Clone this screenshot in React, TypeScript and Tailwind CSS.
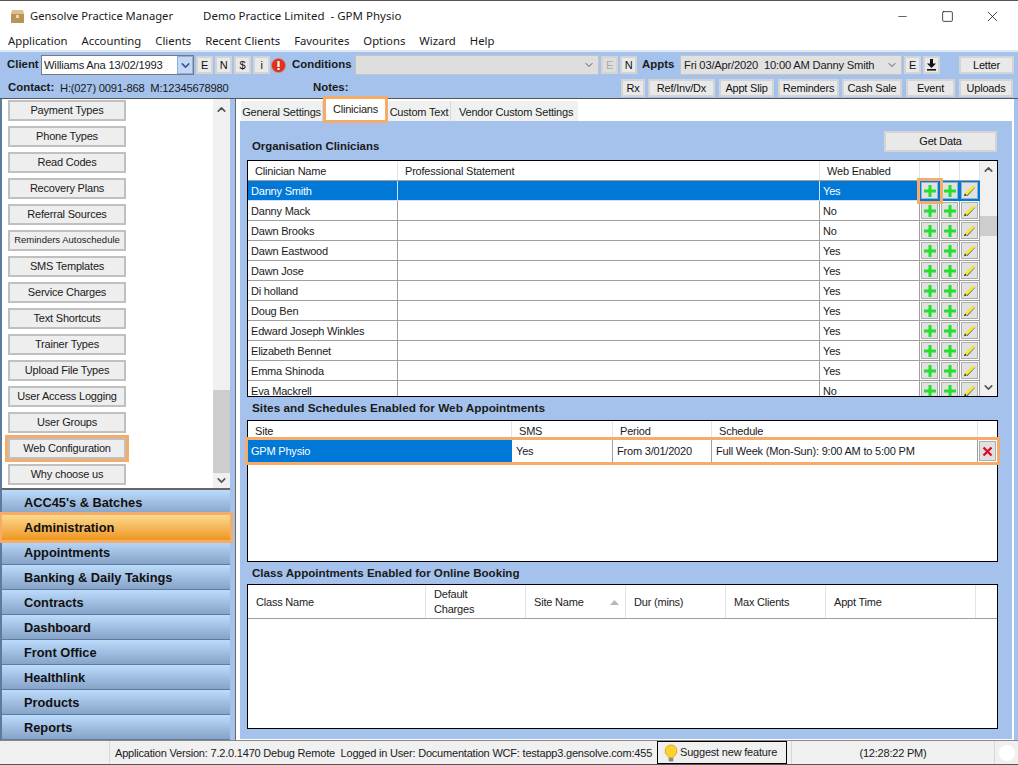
import React from "react";
import { ChevronUp, ChevronDown, Minus, Square, X } from "lucide-react";

const SF = "[font-family:'Liberation_Sans',Arial,sans-serif]";

function Btn({ w, h = "h-[18px]", label, cls = "" }: { w: string; h?: string; label: React.ReactNode; cls?: string }) {
  return (
    <div className={`${w} ${h} ${cls} shrink-0 flex items-center justify-center bg-[#e9e9e9] border-2 border-[#d4d4d4] text-[11px] tracking-[-0.2px] text-[#111] whitespace-nowrap`}>
      {label}
    </div>
  );
}

function Plus() {
  return (
    <svg width="12" height="12" viewBox="0 0 12 12">
      <path d="M4.5 0h3v4.5H12v3H7.5V12h-3V7.5H0v-3h4.5z" fill="#22e02c" />
    </svg>
  );
}

function Pencil() {
  return (
    <svg width="13" height="13" viewBox="0 0 13 13">
      <path d="M1 12 L2 9 L10 1.5 L12 3 L4 11 Z" fill="#f5e92a" />
      <path d="M1 12.3 L2 9.5 L3.8 11.2 Z M3.8 11.6 L11.5 3.8 L12.4 3.2 L4.2 12 Z" fill="#222" />
    </svg>
  );
}

function IconCell({ children, sel }: { children: React.ReactNode; sel?: boolean }) {
  return (
    <div className={`w-[20px] h-full shrink-0 flex items-center justify-center p-[1px] border-r border-b ${sel ? "border-[#0078d7] bg-[#0078d7]" : "border-[#a0a0a0] bg-white"}`}>
      <div className={`w-full h-full flex items-center justify-center bg-[#e1e1e1] border ${sel ? "border-[#8fb3d3]" : "border-[#adadad]"}`}>{children}</div>
    </div>
  );
}

const sideButtons = [
  "Payment Types", "Phone Types", "Read Codes", "Recovery Plans", "Referral Sources", "Reminders Autoschedule",
  "SMS Templates", "Service Charges", "Text Shortcuts", "Trainer Types", "Upload File Types", "User Access Logging",
  "User Groups", "Web Configuration", "Why choose us",
];

const navItems = ["ACC45's & Batches", "Administration", "Appointments", "Banking & Daily Takings", "Contracts", "Dashboard", "Front Office", "Healthlink", "Products", "Reports"];

const clinicians: [string, string][] = [
  ["Danny Smith", "Yes"], ["Danny Mack", "No"], ["Dawn Brooks", "No"], ["Dawn Eastwood", "Yes"], ["Dawn Jose", "Yes"],
  ["Di holland", "Yes"], ["Doug Ben", "Yes"], ["Edward Joseph Winkles", "Yes"], ["Elizabeth Bennet", "Yes"],
  ["Emma Shinoda", "Yes"], ["Eva Mackrell", "No"],
];

function Hd({ w, children, cls = "" }: { w: string; children?: React.ReactNode; cls?: string }) {
  return <div className={`${w} ${cls} shrink-0 h-full flex items-center border-r border-[#e4e4e4] px-[7px] pt-[1px] leading-[15px]`}>{children}</div>;
}

export default function App() {
  return (
    <div className={`w-[1018px] h-[765px] overflow-hidden flex flex-col bg-white text-[11px] tracking-[-0.2px] text-[#1a1a1a] ${SF}`}>
      {/* Title bar */}
      <div className="h-[30px] shrink-0 flex items-center border-t border-[#555] bg-white pl-[10px] pr-[3px] pt-[1px] text-[11.5px] tracking-normal [font-family:'Noto_Sans',sans-serif]">
        <svg width="15" height="15" viewBox="0 0 15 15" className="mr-[5px]">
          <rect x="1" y="5" width="13" height="9" fill="#b8935a" />
          <path d="M2 1h11l1 4H1z" fill="#dcc08c" />
          <rect x="6" y="6" width="3" height="3" fill="#ecd8a8" />
        </svg>
        <span className="w-[173px] text-[11.2px]">Gensolve Practice Manager</span>
        <span className="whitespace-pre">Demo Practice Limited  - GPM Physio</span>
        <div className="flex-1" />
        <div className="w-[45px] flex justify-center"><Minus size={13} strokeWidth={1.2} color="#111" /></div>
        <div className="w-[45px] flex justify-center"><Square size={13} strokeWidth={1.4} color="#111" /></div>
        <div className="w-[45px] flex justify-center"><X size={17} strokeWidth={1.1} color="#111" /></div>
      </div>
      {/* Menu */}
      <div className="h-[20px] shrink-0 flex items-center gap-[14px] pl-[8px] pt-[3px] bg-white text-[11.3px] tracking-normal [font-family:'Noto_Sans',sans-serif]">
        {["Application", "Accounting", "Clients", "Recent Clients", "Favourites", "Options", "Wizard", "Help"].map((m) => (
          <span key={m}>{m}</span>
        ))}
      </div>
      {/* Toolbar */}
      <div className="h-[49px] shrink-0 bg-[#a4c2eb] border-t-2 border-[#dce8f6] border-b border-b-[#555] flex flex-col">
        <div className="h-[26px] shrink-0 flex items-center pl-[7px]">
          <span className="font-bold w-[34px] text-[11.4px] tracking-normal">Client</span>
          <div className="w-[153px] h-[20px] bg-white border border-[#7a7a7a] flex items-center justify-between pl-[2px]">
            <span className="text-[11.2px]">Williams Ana 13/02/1993</span>
            <div className="w-[16px] h-full bg-[#c5d8f3] border border-[#8fb0dc] flex items-center justify-center"><ChevronDown size={13} strokeWidth={3} color="#3a5a90" /></div>
          </div>
          <Btn w="w-[17px]" cls="ml-[2px]" label="E" />
          <Btn w="w-[17px]" cls="ml-[2px]" label="N" />
          <Btn w="w-[17px]" cls="ml-[2px]" label="$" />
          <Btn w="w-[17px]" cls="ml-[2px]" label="i" />
          <svg width="15" height="15" viewBox="0 0 15 15" className="ml-[1px]">
            <circle cx="7.5" cy="7.5" r="7" fill="#e0301e" stroke="#c89070" strokeWidth="0.7" />
            <rect x="6.4" y="3" width="2.2" height="6" fill="#fff" />
            <rect x="6.4" y="10" width="2.2" height="2" fill="#fff" />
          </svg>
          <span className="font-bold ml-[6px] w-[63px] text-[11.4px] tracking-normal">Conditions</span>
          <div className="w-[244px] h-[20px] bg-[#dedede] border border-[#c4c4c4] flex items-center justify-end pr-[3px]"><ChevronDown size={12} color="#555" /></div>
          <Btn w="w-[17px]" cls="ml-[2px] text-[#aaa]! bg-[#dedede]!" label="E" />
          <Btn w="w-[17px]" cls="ml-[2px]" label="N" />
          <span className="font-bold ml-[5px] w-[38px] text-[11.4px] tracking-normal">Appts</span>
          <div className="w-[222px] h-[20px] bg-[#e1e1e1] border border-[#c4c4c4] flex items-center justify-between pl-[3px] pr-[3px]">
            <span className="whitespace-pre text-[11.2px]">Fri 03/Apr/2020  10:00 AM Danny Smith</span>
            <ChevronDown size={12} color="#555" />
          </div>
          <Btn w="w-[17px]" cls="ml-[2px]" label="E" />
          <Btn
            w="w-[17px]"
            cls="ml-[2px]"
            label={
              <svg width="11" height="12" viewBox="0 0 11 12">
                <path d="M4 0h3v4.5h3L5.5 9 1 4.5h3z" fill="#111" />
                <rect x="1" y="10" width="9" height="1.6" fill="#111" />
              </svg>
            }
          />
          <Btn w="w-[55px]" cls="ml-[19px]" label="Letter" />
        </div>
        <div className="h-[20px] shrink-0 flex items-center pl-[8px]">
          <span className="font-bold w-[52px] text-[11.4px] tracking-normal">Contact:</span>
          <span className="w-[253px] whitespace-pre text-[11.2px]">H:(027) 0091-868  M:12345678980</span>
          <span className="font-bold w-[308px] text-[11.4px] tracking-normal">Notes:</span>
          <Btn w="w-[24px]" label="Rx" />
          <Btn w="w-[67px]" cls="ml-[3px]" label="Ref/Inv/Dx" />
          <Btn w="w-[55px]" cls="ml-[4px]" label="Appt Slip" />
          <Btn w="w-[61px]" cls="ml-[4px]" label="Reminders" />
          <Btn w="w-[60px]" cls="ml-[3px]" label="Cash Sale" />
          <Btn w="w-[49px]" cls="ml-[4px]" label="Event" />
          <Btn w="w-[54px]" cls="ml-[4px]" label="Uploads" />
        </div>
      </div>
      {/* Main */}
      <div className="h-[641px] shrink-0 flex bg-[#a4c2eb]">
        {/* Left */}
        <div className="w-[230px] shrink-0 flex flex-col pl-[2px] bg-[#5d7c9c]">
          <div className="h-[391px] shrink-0 flex bg-white border-b-2 border-[#666]">
            <div className="w-[211px] flex flex-col gap-[5px] pl-[6px] mt-[1px]">
              {sideButtons.map((b) => {
                const sel = b === "Web Configuration";
                return (
                  <div
                    key={b}
                    className={`w-[118px] h-[21px] shrink-0 flex items-center justify-center bg-[#eeeeee] border-2 border-[#c0c0c0] whitespace-nowrap ${b === "Reminders Autoschedule" ? "text-[9.5px] tracking-normal" : "text-[11px]"} ${sel ? "outline-[3px] outline-[#f5ab6a]" : ""}`}
                  >
                    {b}
                  </div>
                );
              })}
            </div>
            <div className="w-[17px] shrink-0 bg-[#f0f0f0] flex flex-col">
              <div className="h-[20px] flex items-center justify-center"><ChevronUp size={13} strokeWidth={3} color="#555" /></div>
              <div className="h-[271px]" />
              <div className="h-[83px] bg-[#cdcdcd]" />
              <div className="flex-1 flex items-center justify-center"><ChevronDown size={13} strokeWidth={3} color="#555" /></div>
            </div>
          </div>
          <div className="flex-1 flex flex-col">
            {navItems.map((n) => {
              const sel = n === "Administration";
              return (
                <div
                  key={n}
                  className={`h-[25px] shrink-0 flex items-center pl-[22px] pt-[1px] font-bold text-[12.8px] tracking-normal text-[#111] border-b ${sel ? "relative z-10 bg-gradient-to-b from-[#fbd98a] to-[#ee991c] border-[#ee991c] outline-[3px] outline-[#f5ab6a]" : "bg-gradient-to-b from-[#bcdcfc] to-[#87a3c9] border-[#5d7c9c]"}`}
                >
                  {n}
                </div>
              );
            })}
          </div>
        </div>
        {/* Right */}
        <div className="w-[6px] shrink-0 bg-[#a4c2eb] border-r border-[#666]" />
        <div className="w-[778px] shrink-0 flex flex-col bg-white pl-[4px] pr-[2px] pb-[1px]">
          {/* Tabs */}
          <div className="h-[22px] shrink-0 flex items-end pl-[1px]">
            <div className="w-[82px] h-[20px] bg-[#f0f0f0] flex items-center justify-center border-r border-[#d9d9d9] whitespace-nowrap pt-[2px]">General Settings</div>
            <div className="w-[59px] h-[21px] ml-[3px] mb-[1px] bg-white flex items-center justify-center relative z-10 outline-[3px] outline-[#f5ab6a]">Clinicians</div>
            <div className="w-[63px] h-[20px] ml-[3px] bg-[#f0f0f0] flex items-center justify-center border-r border-[#d9d9d9] whitespace-nowrap pt-[2px]">Custom Text</div>
            <div className="w-[127px] h-[20px] bg-[#f0f0f0] flex items-center pl-[8px] whitespace-nowrap pt-[2px]">Vendor Custom Settings</div>
          </div>
          <div className="flex-1 flex flex-col bg-[#a4c2eb] pl-[7px] pr-[14px]">
            <div className="h-[39px] shrink-0 flex items-end justify-between pb-[8px]">
              <span className="font-bold text-[11.4px] tracking-normal pl-[5px] -mb-[3px]">Organisation Clinicians</span>
              <Btn w="w-[113px]" h="h-[21px]" cls="mr-[1px]" label="Get Data" />
            </div>
            {/* Grid 1 */}
            <div className="h-[237px] shrink-0 bg-white border border-black flex overflow-hidden">
              <div className="w-[732px] shrink-0 flex flex-col">
                <div className="h-[20px] shrink-0 flex border-b border-[#a0a0a0]">
                  <Hd w="w-[150px]">Clinician Name</Hd>
                  <Hd w="w-[422px]">Professional Statement</Hd>
                  <Hd w="w-[100px]">Web Enabled</Hd>
                  <Hd w="w-[20px]" />
                  <Hd w="w-[20px]" />
                  <Hd w="w-[20px]" />
                </div>
                {clinicians.map(([name, web], i) => {
                  const sel = i === 0;
                  return (
                    <div key={name} className={`h-[20px] shrink-0 flex ${sel ? "bg-[#0078d7] text-white" : "bg-white"}`}>
                      <div className={`w-[150px] shrink-0 flex items-center pl-[3px] pt-[1px] border-r border-b ${sel ? "border-[#cfe2f5]" : "border-[#a0a0a0]"}`}>{name}</div>
                      <div className={`w-[422px] shrink-0 border-r border-b ${sel ? "border-[#cfe2f5]" : "border-[#a0a0a0]"}`} />
                      <div className={`w-[100px] shrink-0 flex items-center pl-[3px] pt-[1px] border-r border-b ${sel ? "border-[#cfe2f5]" : "border-[#a0a0a0]"}`}>{web}</div>
                      <div className={`w-[20px] shrink-0 h-full ${sel ? "relative z-10 outline-[3px] outline-[#f5ab6a]" : ""}`}>
                        <IconCell sel={sel}><Plus /></IconCell>
                      </div>
                      <IconCell sel={sel}><Plus /></IconCell>
                      <IconCell sel={sel}><Pencil /></IconCell>
                    </div>
                  );
                })}
              </div>
              <div className="flex-1 bg-[#f0f0f0] flex flex-col">
                <div className="h-[17px] flex items-center justify-center"><ChevronUp size={13} strokeWidth={3} color="#555" /></div>
                <div className="h-[38px]" />
                <div className="h-[20px] bg-[#cdcdcd]" />
                <div className="flex-1" />
                <div className="h-[17px] flex items-center justify-center"><ChevronDown size={13} strokeWidth={3} color="#555" /></div>
              </div>
            </div>
            <div className="h-[23px] shrink-0 flex items-center pl-[5px] font-bold text-[11.8px] tracking-normal">Sites and Schedules Enabled for Web Appointments</div>
            {/* Grid 2 */}
            <div className="h-[142px] shrink-0 bg-white border border-black flex flex-col">
              <div className="h-[19px] shrink-0 flex">
                <Hd w="w-[264px]">Site</Hd>
                <Hd w="w-[101px]">SMS</Hd>
                <Hd w="w-[99px]">Period</Hd>
                <Hd w="w-[266px]">Schedule</Hd>
              </div>
              <div className="h-[22px] shrink-0 flex relative z-10 outline-[3px] outline-[#f5ab6a]">
                <div className="w-[264px] shrink-0 flex items-center pl-[3px] bg-[#0078d7] text-white">GPM Physio</div>
                <div className="w-[101px] shrink-0 flex items-center pl-[4px] border-r border-[#a0a0a0]">Yes</div>
                <div className="w-[99px] shrink-0 flex items-center pl-[4px] border-r border-[#a0a0a0]">From 3/01/2020</div>
                <div className="w-[266px] shrink-0 flex items-center pl-[4px] border-r border-[#a0a0a0]">Full Week (Mon-Sun): 9:00 AM to 5:00 PM</div>
                <div className="flex-1 p-[1px] flex">
                  <div className="flex-1 flex items-center justify-center bg-[#e1e1e1] border border-[#adadad]">
                    <svg width="11" height="11" viewBox="0 0 11 11"><path d="M1.5 1.5 L9.5 9.5 M9.5 1.5 L1.5 9.5" stroke="#d81020" strokeWidth="2.4" /></svg>
                  </div>
                </div>
              </div>
            </div>
            <div className="h-[22px] shrink-0 flex items-center pl-[5px] font-bold text-[11.6px] tracking-normal">Class Appointments Enabled for Online Booking</div>
            {/* Grid 3 */}
            <div className="h-[145px] shrink-0 bg-white border border-black flex flex-col">
              <div className="h-[34px] shrink-0 flex border-b border-[#a0a0a0] text-[#222]">
                <Hd w="w-[178px]" cls="pl-[8px]">Class Name</Hd>
                <Hd w="w-[100px]" cls="pl-[8px]">Default<br />Charges</Hd>
                <Hd w="w-[100px]" cls="pl-[8px] justify-between">
                  <span>Site Name</span>
                  <svg width="9" height="5" viewBox="0 0 9 5" className="-mr-[1px]"><path d="M4.5 0L9 5H0z" fill="#b5b5b5" /></svg>
                </Hd>
                <Hd w="w-[100px]" cls="pl-[8px]">Dur (mins)</Hd>
                <Hd w="w-[100px]" cls="pl-[8px]">Max Clients</Hd>
                <Hd w="w-[150px]" cls="pl-[8px]">Appt Time</Hd>
              </div>
            </div>
          </div>
        </div>
      </div>
      {/* Status */}
      <div className="h-[25px] shrink-0 flex items-center bg-[#f0f0f0] border-t border-[#888] border-b border-b-[#555]">
        <div className="w-[110px] h-full shrink-0 border-r border-[#d8d8d8]" />
        <span className="w-[547px] shrink-0 pl-[5px] pt-[1px] whitespace-pre">Application Version: 7.2.0.1470 Debug Remote  Logged in User: Documentation WCF: testapp3.gensolve.com:455</span>
        <div className="w-[130px] h-full shrink-0 border border-black flex items-center pl-[6px] gap-[2px]">
          <svg width="14" height="18" viewBox="0 0 14 18">
            <path d="M7 1a6 6 0 0 1 3.5 10.8c-.6.5-.9 1-.9 1.7H4.4c0-.7-.3-1.2-.9-1.7A6 6 0 0 1 7 1z" fill="#fbd22e" stroke="#d9a21a" strokeWidth="0.8" />
            <rect x="4.6" y="14" width="4.8" height="3.4" rx="1" fill="#8a8a8a" />
          </svg>
          <span className="whitespace-nowrap">Suggest new feature</span>
        </div>
        <div className="w-[204px] h-full shrink-0 ml-[4px] border-l border-r border-[#d8d8d8] flex items-center justify-center pt-[1px]">(12:28:22 PM)</div>
        <div className="ml-[4px] w-[16px] h-[16px] rounded-full bg-white" />
      </div>
    </div>
  );
}
